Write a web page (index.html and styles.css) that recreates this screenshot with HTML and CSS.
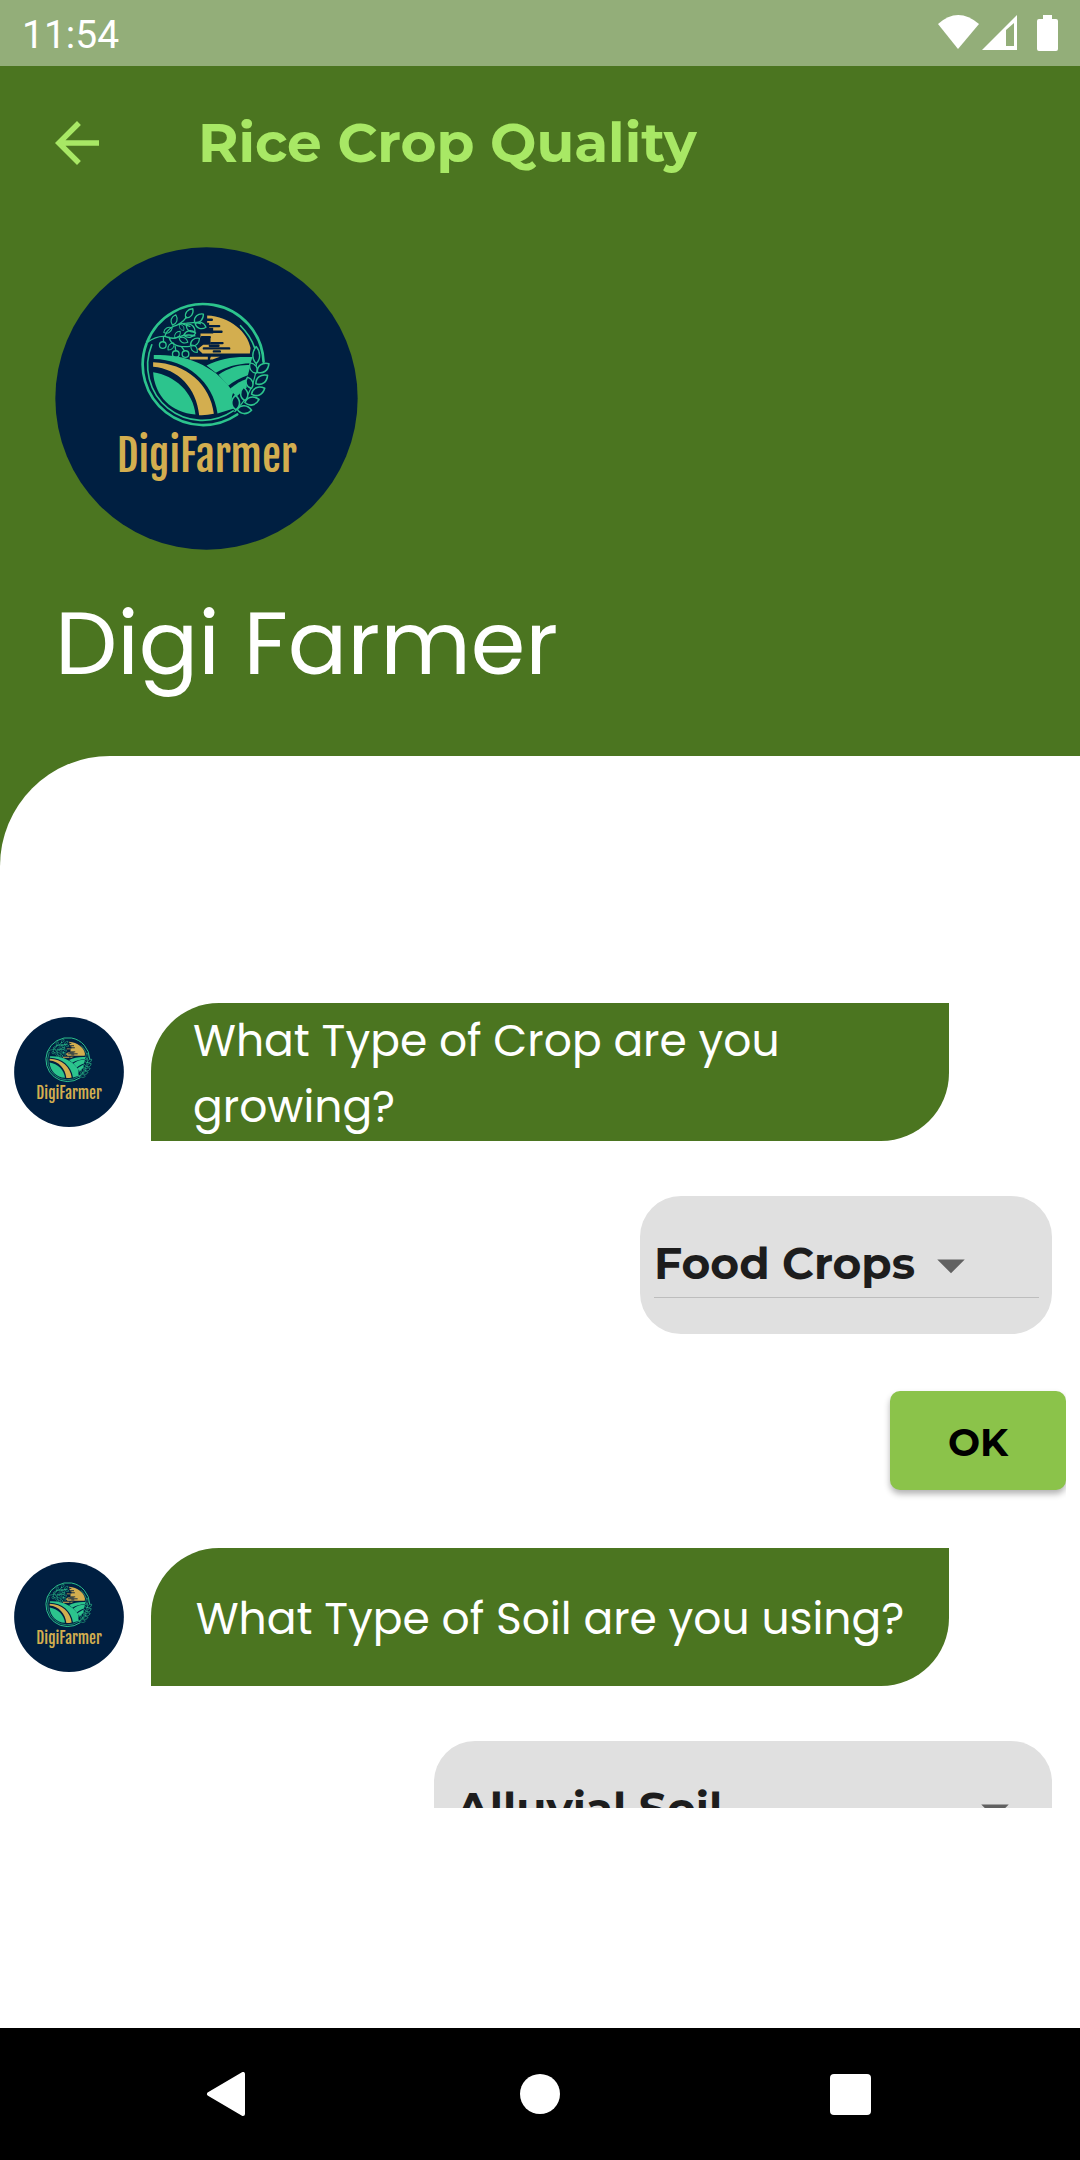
FILE: index.html
```html
<!DOCTYPE html>
<html lang="en">
<head>
<meta charset="utf-8">
<meta name="viewport" content="width=device-width, initial-scale=1">
<title>Rice Crop Quality</title>
<link rel="stylesheet" href="styles.css">
</head>
<body>
<svg width="0" height="0" class="defs" aria-hidden="true">
  <defs>
    <path id="leaf" d="M0 0C-13 -9 -13 -25 0 -36C13 -25 13 -9 0 0Z"/>
    <symbol id="logo" viewBox="46 52 908 908">
      <circle cx="500" cy="506" r="453" fill="#001f41"/>
      <g fill="none" stroke="#2cc48d" stroke-linecap="round">
        <path stroke-width="8" d="M322 337A181 181 0 0 1 671 396M320 342A181 181 0 0 0 592 554"/>
        <path stroke-width="5" d="M336 345A164 164 0 0 0 580 543M602 288Q632 318 645 356"/>
      </g>
      <path fill="#d3ae4f" d="M502 257C570 260 624 307 632 355L630 371H488L474 358L490 345H512V323H482V311H520V294H508V279H502ZM450 381H504V389H450ZM513 381H540L518 389H510Z"/>
      <path fill="none" stroke="#001f41" stroke-width="7" stroke-linecap="round" d="M500 270H516M506 289H538M506 306H545M486 322H510M514 340H548M492 356H568M510 348H536M522 365H540"/>
      <g fill="#2cc48d">
        <path d="M342 376C440 370 536 414 580 488Q570 510 582 536L533 551C520 455 440 390 342 388Z"/>
        <path d="M340 427C405 437 460 486 467 554C395 548 345 500 340 427Z"/>
        <path d="M500 407C540 385 590 379 638 382L632 400C590 402 557 411 528 429Z"/>
        <path d="M536 435C570 412 600 404 632 406L624 436C600 444 580 455 565 468Z"/>
        <path d="M571 476C590 462 603 453 622 447L620 474L590 500L578 488Z"/>
      </g>
      <path fill="#d3ae4f" d="M340 397C440 400 512 464 522 552Q500 557 478 556C470 475 415 417 340 411Z"/>
      <g fill="#001f41" stroke="#2cc48d" stroke-width="4" stroke-linecap="round" stroke-linejoin="round">
        <path fill="none" d="M585 545Q650 480 650 395M322 338Q350 318 375 320Q385 285 440 280Q468 276 482 282M375 320Q400 330 415 322Q440 312 465 318M388 322Q395 355 450 350M400 290Q425 283 440 262M430 283L450 290"/>
        <use href="#leaf" transform="translate(649 401) scale(1.05 1.4)"/>
        <use href="#leaf" transform="translate(650 430) rotate(-32)"/>
        <use href="#leaf" transform="translate(652 427) rotate(54) scale(1.2)"/>
        <use href="#leaf" transform="translate(635 476) rotate(-20)"/>
        <use href="#leaf" transform="translate(648 462) rotate(54) scale(1.2)"/>
        <use href="#leaf" transform="translate(615 512) rotate(-6) scale(1.1)"/>
        <use href="#leaf" transform="translate(635 493) rotate(66) scale(1.2)"/>
        <use href="#leaf" transform="translate(588 540) rotate(-2) scale(1.2)"/>
        <use href="#leaf" transform="translate(615 518) rotate(78) scale(1.2)"/>
        <use href="#leaf" transform="translate(592 538) rotate(94) scale(1.2)"/>
        <g fill="none">
          <use href="#leaf" transform="translate(438 264) rotate(38) scale(.95)"/>
          <use href="#leaf" transform="translate(464 277) rotate(48)"/>
          <use href="#leaf" transform="translate(466 282) rotate(108) scale(.95)"/>
          <use href="#leaf" transform="translate(398 286) rotate(18) scale(.9)"/>
          <use href="#leaf" transform="translate(440 284) rotate(132) scale(.95)"/>
          <use href="#leaf" transform="translate(420 284) rotate(148) scale(.6)"/>
          <use href="#leaf" transform="translate(372 308) rotate(62) scale(.8)"/>
          <use href="#leaf" transform="translate(405 324) rotate(40) scale(.7)"/>
          <use href="#leaf" transform="translate(432 316) rotate(80)"/>
          <use href="#leaf" transform="translate(418 325) rotate(115) scale(.8)"/>
          <use href="#leaf" transform="translate(452 347) rotate(52) scale(.95)"/>
          <use href="#leaf" transform="translate(454 346) rotate(140) scale(.8)"/>
          <use href="#leaf" transform="translate(402 340) rotate(220) scale(.75)"/>
          <circle cx="369" cy="346" r="10"/>
          <circle cx="408" cy="373" r="10"/>
          <circle cx="437" cy="373" r="10"/>
          <path d="M371 336V322M408 363L406 350M434 363L426 352"/>
        </g>
      </g>
      <text class="logo-text" x="501" y="726" text-anchor="middle">DigiFarmer</text>
    </symbol>
    <symbol id="caret" viewBox="0 0 24 24"><path d="M7 10l5 5 5-5z" fill="#616161"/></symbol>
  </defs>
</svg>

<div class="app">
  <header class="header">
    <div class="status">
      <span>11:54</span>
      <svg class="status-icons" viewBox="0 0 120 36" aria-hidden="true" fill="#fff">
        <path d="M0 9Q20 -9 41 9L20 34Z"/>
        <path fill-rule="evenodd" d="M44 35L79 0V35ZM68 15V31H76V8Z"/>
        <path d="M105 0h9v4h4q2 0 2 2v28q0 2-2 2h-17q-2 0-2-2V6q0-2 2-2h4z"/>
      </svg>
    </div>
    <nav class="appbar">
      <button class="back" type="button" aria-label="Back">
        <svg viewBox="0 0 24 24"><path fill="#a8e865" d="M20 11H7.830l5.590-5.590L12 4l-8 8 8 8 1.410-1.410L7.830 13H20v-2z"/></svg>
      </button>
      <h1 class="title">Rice Crop Quality</h1>
    </nav>
    <div class="profile">
      <svg class="portrait" role="img" aria-label="DigiFarmer logo"><use href="#logo"/></svg>
      <h2 class="name">Digi Farmer</h2>
    </div>
  </header>

  <main class="panel">
    <div class="chat">
      <div class="message">
        <svg class="avatar" aria-hidden="true"><use href="#logo"/></svg>
        <label class="bubble" for="crop">What Type of Crop are you growing?</label>
      </div>
      <div class="field field-crop">
        <div class="picker underlined">
          <select id="crop"><option>Food Crops</option></select>
          <svg class="caret" aria-hidden="true"><use href="#caret"/></svg>
        </div>
      </div>
      <button class="ok" type="button">OK</button>
      <div class="message">
        <svg class="avatar" aria-hidden="true"><use href="#logo"/></svg>
        <label class="bubble centered" for="soil">What Type of Soil are you using?</label>
      </div>
      <div class="field field-soil">
        <div class="picker">
          <select id="soil"><option>Alluvial Soil</option></select>
          <svg class="caret" aria-hidden="true"><use href="#caret"/></svg>
        </div>
      </div>
    </div>
  </main>

  <nav class="navbar">
    <button type="button" aria-label="Back"><svg viewBox="0 0 44 44"><path d="M3 22L37 2V42Z" fill="#fff" stroke="#fff" stroke-width="4" stroke-linejoin="round"/></svg></button>
    <button type="button" aria-label="Home"><svg viewBox="0 0 44 44"><circle cx="22" cy="22" r="20" fill="#fff"/></svg></button>
    <button type="button" aria-label="Overview"><svg viewBox="0 0 44 44"><rect x="0" y="2" width="41" height="41" rx="4" fill="#fff"/></svg></button>
  </nav>
</div>
</body>
</html>
```
FILE: styles.css
```css
* {
  box-sizing: border-box;
}

body {
  margin: 0;
  background: #4b7520;
  font-family: Poppins, Inter, sans-serif;
  color: #fff;
}

button {
  border: 0;
  padding: 0;
  background: none;
  cursor: pointer;
}

svg {
  display: block;
}

.defs {
  position: absolute;
}

.app {
  display: flex;
  flex-direction: column;
  height: 100vh;
}

.status {
  display: flex;
  align-items: center;
  justify-content: space-between;
  height: 66px;
  padding: 0 22px;
  background: #93ae79;
  font: 39px/46px Roboto, sans-serif;
}

.status span {
  padding-top: 3px;
}

.status-icons {
  width: 120px;
  height: 36px;
}

.appbar {
  display: flex;
  align-items: center;
  gap: 88px;
  height: 154px;
  padding: 0 44px;
}

.back,
.back svg {
  width: 66px;
  height: 66px;
}

.title {
  margin: 0;
  color: #a8e865;
  font: 700 55px/66px Montserrat, Inter, sans-serif;
}

.profile {
  padding: 27px 55px 46px;
}

.portrait {
  width: 303px;
  height: 303px;
}

.logo-text {
  fill: #d3ae4f;
  font: 400 127px "Fjalla One", "Pathway Gothic One", "Oswald", "Roboto Condensed", "Liberation Sans Narrow", sans-serif;
}

.name {
  margin: 28px 0 0;
  font-size: 88px;
  line-height: 132px;
  font-weight: 400;
}

.panel {
  display: flex;
  flex: 1;
  min-height: 0;
  padding: 247px 14px 220px;
  background: #fff;
  border-top-left-radius: 110px;
}

.chat {
  display: flex;
  flex: 1;
  flex-direction: column;
  gap: 55px;
  overflow-y: auto;
  scrollbar-width: none;
}

.chat > * {
  flex-shrink: 0;
}

.message {
  display: flex;
  align-items: center;
  gap: 27px;
}

.avatar {
  width: 110px;
  height: 110px;
}

.bubble {
  display: flex;
  align-items: center;
  width: 798px;
  height: 138px;
  padding: 3px 42px 0;
  background: #4b7520;
  border-radius: 68px 0;
  font-size: 44px;
  line-height: 66px;
}

.centered {
  justify-content: center;
}

.field {
  display: flex;
  flex-direction: column;
  justify-content: center;
  align-self: flex-end;
  height: 138px;
  margin-right: 14px;
  background: #e0e0e0;
  border-radius: 41px;
}

.field-crop {
  width: 412px;
  padding: 0 13px 0 14px;
}

.field-soil {
  width: 618px;
  padding: 0 24px 0 22px;
}

.picker {
  display: flex;
  align-items: flex-start;
  height: 66px;
}

.underlined {
  border-bottom: 1px solid #bdbdbd;
}

.picker select {
  appearance: none;
  height: 62px;
  border: 0;
  padding: 0;
  background: none;
  color: #1d1d1d;
  font: 700 44px/62px Montserrat, Inter, sans-serif;
}

.field-crop select {
  width: 264px;
}

.field-soil select {
  flex: 1;
}

.caret {
  width: 66px;
  height: 66px;
}

.ok {
  align-self: flex-end;
  width: 176px;
  height: 99px;
  margin: 2px 0 3px;
  padding-top: 4px;
  border-radius: 10px;
  background: #8bc34a;
  box-shadow: 0 4px 6px rgba(0, 0, 0, 0.3);
  color: #000;
  font: 700 38px/44px Montserrat, Inter, sans-serif;
}

.navbar {
  display: flex;
  align-items: center;
  justify-content: center;
  gap: 268px;
  height: 132px;
  background: #000;
}

.navbar svg {
  width: 44px;
  height: 44px;
}
```
